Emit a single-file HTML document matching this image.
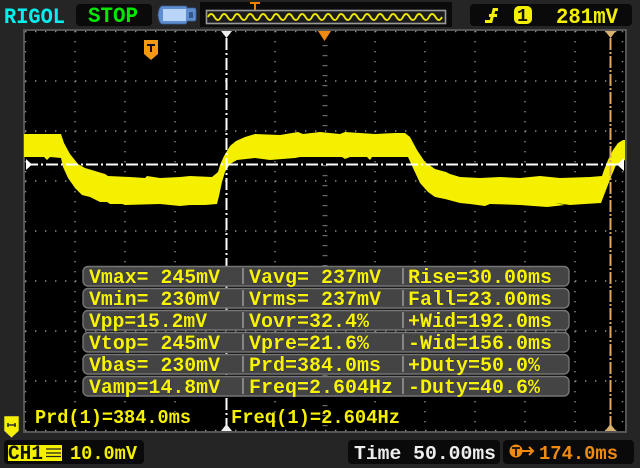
<!DOCTYPE html>
<html><head><meta charset="utf-8">
<style>
html,body{margin:0;padding:0;background:#252525;width:640px;height:468px;overflow:hidden}
svg{display:block;filter:blur(.35px)}
text{font-family:"Liberation Mono",monospace;font-weight:700}
.m{font-size:20px;fill:#f8f400;stroke:#15156a;stroke-width:.5;paint-order:stroke}
</style></head><body>
<svg width="640" height="468" viewBox="0 0 640 468" xmlns="http://www.w3.org/2000/svg">
<rect width="640" height="468" fill="#252525"/>
<!-- header -->
<text x="4" y="23" font-size="22" fill="#00f0f0" stroke="#902040" stroke-width=".25" paint-order="stroke" textLength="61" lengthAdjust="spacingAndGlyphs">RIGOL</text>
<rect x="76" y="4" width="76" height="22" rx="4" fill="#0a0a0a"/>
<text x="88" y="22" font-size="22" fill="#00e800" textLength="50" lengthAdjust="spacingAndGlyphs">STOP</text>
<!-- battery -->
<path d="M161 6H185Q187 6 187 8H194Q196 8 196 10V19Q196 21 194 21H187Q187 24 185 24H163Q160 24 159 20L158 15 159 10Q160 6 163 6Z" fill="#5e8ed0" stroke="#3a5e96" stroke-width=".8"/>
<rect x="163" y="9" width="23" height="12" fill="#b8d4f8"/>
<rect x="189" y="12" width="4" height="6" fill="#34568a"/>
<rect x="200" y="2" width="252" height="25" fill="#0b0b0b"/>
<rect x="206.5" y="10.5" width="239" height="13" fill="#1c1c1c" stroke="#999" stroke-width="1.6"/>
<path d="M208 17q3-6 6.5 0t6.5 0 6.5 0 6.5 0 6.5 0 6.5 0 6.5 0 6.5 0 6.5 0 6.5 0 6.5 0 6.5 0 6.5 0 6.5 0 6.5 0 6.5 0 6.5 0 6.5 0 6.5 0 6.5 0 6.5 0 6.5 0 6.5 0 6.5 0 6.5 0 6.5 0 6.5 0 6.5 0 6.5 0 6.5 0 6.5 0 6.5 0 6.5 0 6.5 0 6.5 0 6.5 0" fill="none" stroke="#f0e800" stroke-width="1.9"/>
<path d="M250 3H260M255 3V10" stroke="#f08000" stroke-width="2" fill="none"/>
<rect x="470" y="4" width="162" height="22" rx="4" fill="#0a0a0a"/>
<path d="M485 21.5H491L494 9.5H498M489 15.5H497" stroke="#f5f000" stroke-width="3" fill="none"/>
<rect x="514" y="6" width="18" height="18" rx="5" fill="#f5f000"/>
<text x="517" y="21" font-size="18" fill="#111" textLength="11" lengthAdjust="spacingAndGlyphs">1</text>
<text x="556" y="23" font-size="22" fill="#f5f000" textLength="62" lengthAdjust="spacingAndGlyphs">281mV</text>
<!-- screen -->
<rect x="23" y="29" width="604" height="404" fill="#555"/>
<rect x="25" y="31" width="600" height="400" fill="#000"/>
<g stroke="#8c8c8c" stroke-width="1.4" fill="none" stroke-dasharray="1.4 8.6">
<path d="M25 31.5H625M25 81H625M25 131H625M25 181H625M25 231H625M25 281H625M25 331H625M25 381H625M25 430.5H625"/>
<path d="M25.5 31V431M75 31V431M125 31V431M175 31V431M275 31V431M375 31V431M425 31V431M475 31V431M525 31V431M575 31V431M622.5 31V431"/>
</g>
<path d="M325 45V431" stroke="#666" stroke-width="5" stroke-dasharray="1.2 8.8" fill="none"/>
<!-- wave -->
<path fill="#f4f000" d="M24 134H61L64 143 70 154 78 164 85 168 95 171 105 174 108 176 130 177 145 178 147 176 160 178 180 177 190 176 212 177 218 172 220 165 224 156 230 146 236 141 245 137 255 134 280 135 298 132 303 134 320 132 340 134 345 132 375 134 395 133 405 133 410 137 417 150 425 162 435 169 446 172 450 174 460 177 480 178 500 177 520 178 540 176 560 178 590 177 602 176 604 170 608 160 613 150 618 143 623 140H625V160L616 165 611 177 606 190 601 203 585 204 570 205 555 203 565 205 547 207 520 205 490 204 485 206 470 204 460 203 445 199 435 197 428 192 420 183 413 168 408 157 372 157 370 160 367 157 350 157 345 159 342 157 300 157 295 158 270 160 255 158 237 160 230 164 225 172 222 182 219 196 217 204 205 205 190 205 180 206 160 204 125 205 122 204 110 204 107 202 100 202 90 197 82 195 75 188 68 178 63 167 61 158 50 157 47 160 44 157 24 157Z"/>
<!-- overlay lines -->
<path d="M226.5 38V431" stroke="#fff" stroke-width="2" stroke-dasharray="12 3 2 3" fill="none"/>
<path d="M221 31H232L226.5 38ZM221 431H232L226.5 424Z" fill="#eee"/>
<path d="M610.5 38V431" stroke="#e0a860" stroke-width="2" stroke-dasharray="12 2 2 2" fill="none"/>
<path d="M605 31H616L610.5 38ZM605 431H616L610.5 424Z" fill="#d8b070"/>
<path d="M26 164.5H625" stroke="#fff" stroke-width="2" stroke-dasharray="12 3 2 3" fill="none"/>
<path d="M26 159V170L32 164.5ZM624 158V171L617 164.5Z" fill="#fff"/>
<path d="M318 31H331L324.5 41Z" fill="#f08a10"/>
<path d="M144 40H158V54L151 60 144 54Z" fill="#f59a10"/>
<path d="M147 45H155M151 45V52" stroke="#111" stroke-width="2" fill="none"/>
<!-- measure panel -->
<g fill="#444" stroke="#757575" stroke-width="1.4">
<rect x="83" y="266.5" width="486" height="19.5" rx="5"/>
<rect x="83" y="288.5" width="486" height="19.5" rx="5"/>
<rect x="83" y="310.5" width="486" height="19.5" rx="5"/>
<rect x="83" y="332.5" width="486" height="19.5" rx="5"/>
<rect x="83" y="354.5" width="486" height="19.5" rx="5"/>
<rect x="83" y="376.5" width="486" height="19.5" rx="5"/>
</g>
<path d="M243 268V396M403 268V396" stroke="#858585" stroke-width="2" stroke-dasharray="16 6" fill="none"/>
<g>
<text class="m" x="89" y="283" textLength="131" lengthAdjust="spacingAndGlyphs">Vmax= 245mV</text>
<text class="m" x="89" y="305" textLength="131" lengthAdjust="spacingAndGlyphs">Vmin= 230mV</text>
<text class="m" x="89" y="327" textLength="118" lengthAdjust="spacingAndGlyphs">Vpp=15.2mV</text>
<text class="m" x="89" y="349" textLength="131" lengthAdjust="spacingAndGlyphs">Vtop= 245mV</text>
<text class="m" x="89" y="371" textLength="131" lengthAdjust="spacingAndGlyphs">Vbas= 230mV</text>
<text class="m" x="89" y="393" textLength="131" lengthAdjust="spacingAndGlyphs">Vamp=14.8mV</text>
<text class="m" x="249" y="283" textLength="132" lengthAdjust="spacingAndGlyphs">Vavg= 237mV</text>
<text class="m" x="249" y="305" textLength="132" lengthAdjust="spacingAndGlyphs">Vrms= 237mV</text>
<text class="m" x="249" y="327" textLength="120" lengthAdjust="spacingAndGlyphs">Vovr=32.4%</text>
<text class="m" x="249" y="349" textLength="120" lengthAdjust="spacingAndGlyphs">Vpre=21.6%</text>
<text class="m" x="249" y="371" textLength="132" lengthAdjust="spacingAndGlyphs">Prd=384.0ms</text>
<text class="m" x="249" y="393" textLength="144" lengthAdjust="spacingAndGlyphs">Freq=2.604Hz</text>
<text class="m" x="408" y="283" textLength="144" lengthAdjust="spacingAndGlyphs">Rise=30.00ms</text>
<text class="m" x="408" y="305" textLength="144" lengthAdjust="spacingAndGlyphs">Fall=23.00ms</text>
<text class="m" x="408" y="327" textLength="144" lengthAdjust="spacingAndGlyphs">+Wid=192.0ms</text>
<text class="m" x="408" y="349" textLength="144" lengthAdjust="spacingAndGlyphs">-Wid=156.0ms</text>
<text class="m" x="408" y="371" textLength="132" lengthAdjust="spacingAndGlyphs">+Duty=50.0%</text>
<text class="m" x="408" y="393" textLength="132" lengthAdjust="spacingAndGlyphs">-Duty=40.6%</text>
</g>
<text x="35" y="423" font-size="19" fill="#f5f000" textLength="156" lengthAdjust="spacingAndGlyphs">Prd(1)=384.0ms</text>
<text x="231" y="423" font-size="19" fill="#f5f000" textLength="169" lengthAdjust="spacingAndGlyphs">Freq(1)=2.604Hz</text>
<!-- bottom -->
<path d="M4 416H19V431L11.5 438 4 431Z" fill="#f5f000" stroke="#2a2a60" stroke-width=".6"/>
<path d="M7 425H16M8 423V427M15 423V427" stroke="#333" stroke-width="1.6" fill="none"/>
<rect x="4" y="440" width="140" height="24" rx="4" fill="#0a0a0a"/>
<rect x="8" y="445" width="54" height="16" fill="#f5f000"/>
<text x="8" y="459" font-size="20" fill="#111" textLength="35" lengthAdjust="spacingAndGlyphs">CH1</text>
<path d="M46 449H61M46 453H61M46 456.5H61" stroke="#222" stroke-width="1.3" fill="none"/>
<text x="70" y="459" font-size="19" fill="#f5f000" textLength="67" lengthAdjust="spacingAndGlyphs">10.0mV</text>
<rect x="348" y="440" width="152" height="24" rx="4" fill="#0a0a0a"/>
<text x="354" y="459" font-size="19" fill="#eee" textLength="142" lengthAdjust="spacingAndGlyphs">Time 50.00ms</text>
<rect x="503" y="440" width="131" height="24" rx="4" fill="#0a0a0a"/>
<circle cx="516" cy="451" r="6.5" fill="#f08a10"/>
<path d="M512 448H520M516 448V456" stroke="#111" stroke-width="1.8" fill="none"/>
<path d="M522 451H533M529 447L533 451 529 455" stroke="#f08a10" stroke-width="2" fill="none"/>
<text x="539" y="459" font-size="19" fill="#f08a10" textLength="79" lengthAdjust="spacingAndGlyphs">174.0ms</text>
</svg>
</body></html>
